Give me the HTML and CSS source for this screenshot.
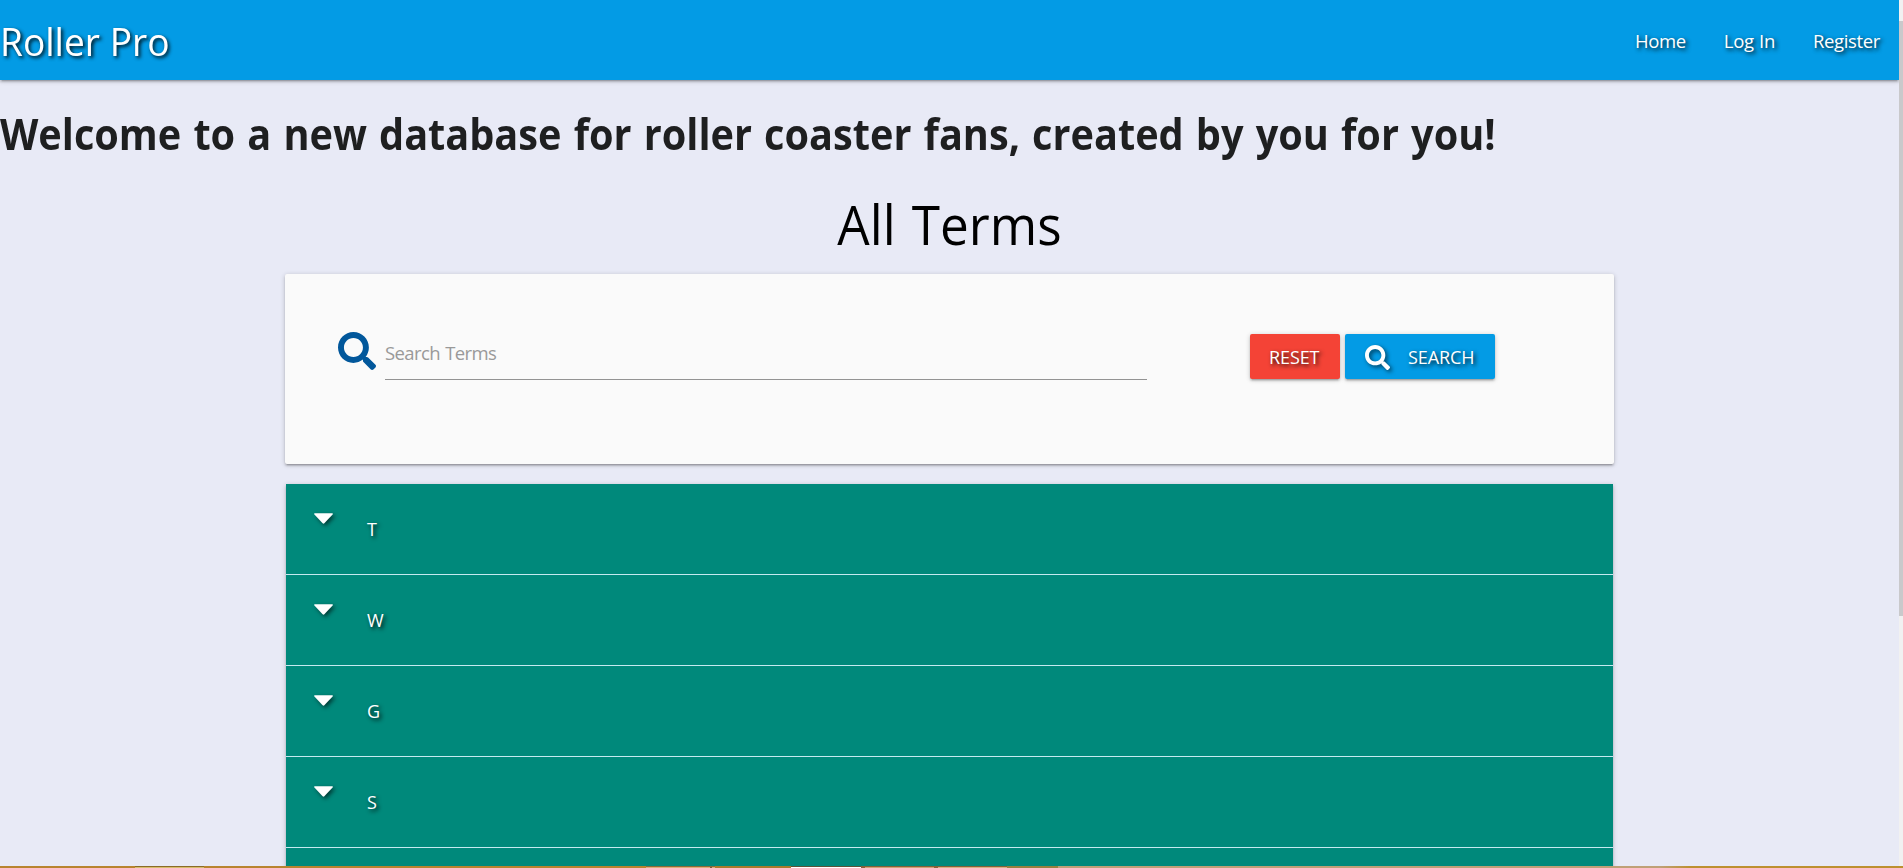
FILE: index.html
```html
<!DOCTYPE html>
<html lang="en">
<head>
<meta charset="utf-8">
<title>Roller Pro</title>
<link rel="stylesheet" href="styles.css">
</head>
<body>
<div class="screen">
  <div class="viewport">
    <div class="page">
      <nav class="navbar">
        <a class="brand">Roller Pro</a>
        <ul class="links"><li>Home</li><li>Log In</li><li>Register</li></ul>
      </nav>
      <h4 class="welcome">Welcome to a new database for roller coaster fans, created by you for you!</h4>
      <h3 class="title">All Terms</h3>
      <main class="container">
        <form class="card">
          <svg class="prefix" viewBox="0 0 512 512"><path d="M505 442.7L405.3 343c-4.500-4.500-10.600-7-17-7H372c27.600-35.300 44-79.700 44-128C416 93.100 322.900 0 208 0S0 93.100 0 208s93.100 208 208 208c48.300 0 92.700-16.400 128-44v16.300c0 6.400 2.500 12.500 7 17l99.700 99.700c9.400 9.400 24.600 9.400 33.900 0l28.300-28.300c9.400-9.400 9.400-24.600.1-34zM208 336c-70.700 0-128-57.200-128-128 0-70.700 57.200-128 128-128 70.700 0 128 57.200 128 128 0 70.700-57.200 128-128 128z"/></svg>
          <div class="field">Search Terms</div>
          <div class="btn reset">RESET</div>
          <div class="btn search"><svg class="glass" viewBox="0 0 512 512"><path d="M505 442.7L405.3 343c-4.500-4.500-10.600-7-17-7H372c27.600-35.300 44-79.700 44-128C416 93.100 322.900 0 208 0S0 93.100 0 208s93.100 208 208 208c48.300 0 92.700-16.400 128-44v16.300c0 6.400 2.500 12.500 7 17l99.700 99.700c9.400 9.400 24.600 9.400 33.900 0l28.300-28.300c9.400-9.400 9.400-24.600.1-34zM208 336c-70.700 0-128-57.200-128-128 0-70.700 57.200-128 128-128 70.700 0 128 57.200 128 128 0 70.700-57.200 128-128 128z"/></svg><span>SEARCH</span></div>
        </form>
        <ul class="terms">
          <li><svg class="caret" viewBox="0 0 18 10"><path d="M.8 0H17.200q1.200.3.400 1.200L9.800 9.500q-.8.800-1.600 0L.4 1.200Q-.4.300.8 0z"/></svg><span>T</span></li>
          <li><svg class="caret" viewBox="0 0 18 10"><path d="M.8 0H17.200q1.200.3.400 1.200L9.800 9.500q-.8.800-1.600 0L.4 1.200Q-.4.300.8 0z"/></svg><span>W</span></li>
          <li><svg class="caret" viewBox="0 0 18 10"><path d="M.8 0H17.200q1.200.3.400 1.200L9.800 9.500q-.8.800-1.600 0L.4 1.200Q-.4.300.8 0z"/></svg><span>G</span></li>
          <li><svg class="caret" viewBox="0 0 18 10"><path d="M.8 0H17.200q1.200.3.400 1.200L9.800 9.500q-.8.800-1.600 0L.4 1.200Q-.4.300.8 0z"/></svg><span>S</span></li>
          <li></li>
        </ul>
      </main>
    </div>
    <div class="scrollbar"><div class="thumb"></div></div>
  </div>
  <div class="taskbar"></div>
</div>
</body>
</html>
```
FILE: styles.css
```css
* { box-sizing: border-box; }
body { margin: 0; font-family: "Open Sans", "Noto Sans", sans-serif; background: #e8eaf6; color: rgba(0,0,0,.87); overflow: hidden; }
.screen { width: 1903px; height: 868px; display: flex; flex-direction: column; }
.viewport { display: flex; height: 866px; overflow: hidden; }
.page { width: 1899px; height: 866px; overflow: hidden; }
.navbar { height: 80px; background: #039be5; color: #fff; display: flex; justify-content: space-between; align-items: center; box-shadow: 0 2px 2px 0 rgba(0,0,0,.14), 0 3px 1px -2px rgba(0,0,0,.12), 0 1px 5px 0 rgba(0,0,0,.2); text-shadow: 2px 2px 4px rgba(0,0,0,.9); }
.brand { font-size: 39px; line-height: 80px; padding-top: 1px; transform: scaleX(.952); transform-origin: 0 0; }
.links { list-style: none; margin: 0; padding: 2px 0 0; display: flex; font-size: 18.500px; line-height: 80px; letter-spacing: -.35px; word-spacing: 1px; }
.links li { padding: 0 19px; }
.welcome { margin: 24px 0 0; font-size: 43px; line-height: 60px; font-weight: 700; white-space: nowrap; word-spacing: 2px; transform: scaleX(.9225); transform-origin: 0 0; }
.title { margin: 20px 0 0; font-size: 55px; line-height: 80px; font-weight: 400; text-align: center; color: #000; word-spacing: 3px; transform: scaleX(.932); }
.container { width: 1329px; margin: 10px auto 0; }
.card { height: 190px; background: #fafafa; border-radius: 2px; padding: 58px 0 0 53px; display: flex; align-items: flex-start; box-shadow: 0 2px 2px 0 rgba(0,0,0,.14), 0 3px 1px -2px rgba(0,0,0,.12), 0 1px 5px 0 rgba(0,0,0,.2); }
.prefix { width: 38px; height: 38px; fill: #01579b; }
.field { margin-left: 9px; width: 762px; height: 48px; border-bottom: 1px solid #939393; font-size: 18.500px; line-height: 42px; letter-spacing: -.6px; word-spacing: 1px; color: #999; }
.btn { height: 45px; margin-top: 2px; border-radius: 2px; color: #fff; font-size: 18px; line-height: 47px; letter-spacing: -.1px; text-shadow: 2px 2px 4px rgba(0,0,0,.9); box-shadow: 0 2px 2px 0 rgba(0,0,0,.14), 0 3px 1px -2px rgba(0,0,0,.12), 0 1px 5px 0 rgba(0,0,0,.2); }
.reset { margin-left: 103px; width: 90px; padding-left: 19px; background: #f44336; }
.search { margin-left: 5px; width: 150px; padding-left: 20px; background: #039be5; display: flex; }
.glass { width: 25px; height: 25px; margin: 11px 18px 0 0; fill: #fff; filter: drop-shadow(2px 2px 2px rgba(0,0,0,.6)); }
.terms { list-style: none; margin: 20px 0 0 1px; padding: 0; width: 1327px; box-shadow: 0 2px 2px 0 rgba(0,0,0,.14), 0 3px 1px -2px rgba(0,0,0,.12), 0 1px 5px 0 rgba(0,0,0,.2); }
.terms li { height: 91px; background: #00897b; border-bottom: 1px solid #c5eaf0; display: flex; color: #fff; font-size: 18px; line-height: 91px; padding-left: 28px; text-shadow: 2px 2px 4px rgba(0,0,0,.9); }
.caret { width: 19px; height: 11px; margin: 29px 34px 0 0; fill: #fff; overflow: visible; filter: drop-shadow(2px 2px 2px rgba(0,0,0,.6)); }
.scrollbar { width: 4px; background: #f1f1f1; padding-top: 21px; }
.thumb { height: 595px; background: #c9c9cb; }
.taskbar {
  height: 2px;
  background:
    linear-gradient(90deg, transparent 135px, #8a6a28 135px 204px, transparent 204px 646px, #8b6a3a 646px 715px, transparent 715px 791px, #5c5238 791px 861px, #84603a 861px 1007px, transparent 1007px) 0 0 / 100% 1px no-repeat,
    linear-gradient(90deg,
    #b8842f 135px, #d6bd6c 135px 204px, #b8842f 204px 646px,
    #dcae76 646px 710px, #7c5a35 710px 712px, #dcae76 712px 715px, #a87b2c 715px 791px,
    #fff 791px 861px, #8b5e38 861px 865px, #cfa272 865px 934px, #8b5e38 934px 938px,
    #d8b080 938px 1007px, #97803f 1007px 1058px, #bfa077 1058px 1660px, #bd9030 1690px);
}
```
